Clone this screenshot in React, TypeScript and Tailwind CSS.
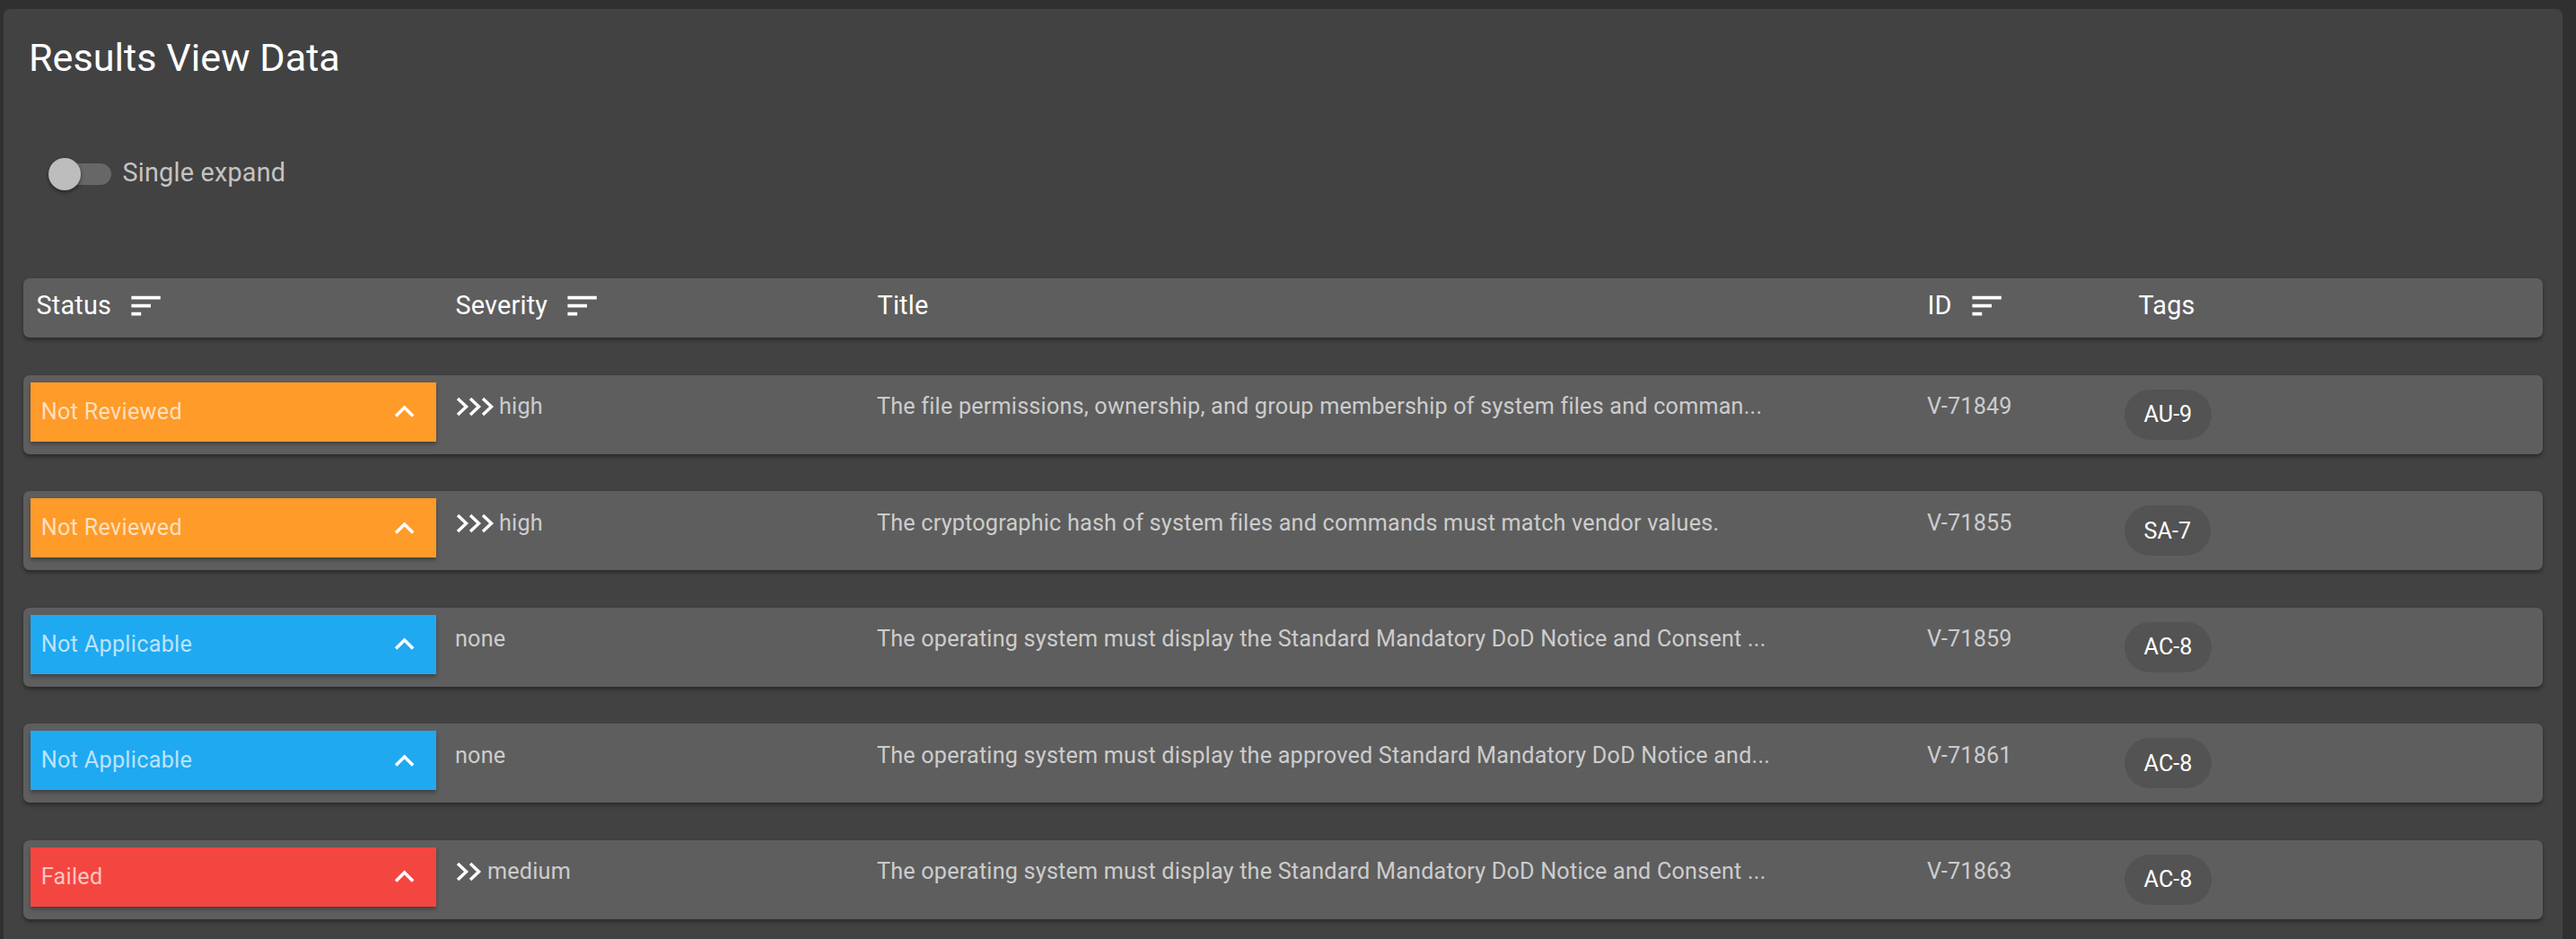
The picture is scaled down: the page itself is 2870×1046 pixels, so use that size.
import React from "react";

type Status = "Not Reviewed" | "Not Applicable" | "Failed";
type Severity = "high" | "medium" | "none";

type Row = {
  status: Status;
  severity: Severity;
  title: string;
  id: string;
  tag: string;
};

const rows: Row[] = [
  {
    status: "Not Reviewed",
    severity: "high",
    title:
      "The file permissions, ownership, and group membership of system files and comman...",
    id: "V-71849",
    tag: "AU-9",
  },
  {
    status: "Not Reviewed",
    severity: "high",
    title:
      "The cryptographic hash of system files and commands must match vendor values.",
    id: "V-71855",
    tag: "SA-7",
  },
  {
    status: "Not Applicable",
    severity: "none",
    title:
      "The operating system must display the Standard Mandatory DoD Notice and Consent ...",
    id: "V-71859",
    tag: "AC-8",
  },
  {
    status: "Not Applicable",
    severity: "none",
    title:
      "The operating system must display the approved Standard Mandatory DoD Notice and...",
    id: "V-71861",
    tag: "AC-8",
  },
  {
    status: "Failed",
    severity: "medium",
    title:
      "The operating system must display the Standard Mandatory DoD Notice and Consent ...",
    id: "V-71863",
    tag: "AC-8",
  },
];

const statusColor: Record<Status, string> = {
  "Not Reviewed": "bg-[#fe9b29]",
  "Not Applicable": "bg-[#1fa9f1]",
  Failed: "bg-[#f44640]",
};

function SortIcon() {
  return (
    <svg
      width="43.2"
      height="43.2"
      viewBox="0 0 24 24"
      className="ml-[17px] shrink-0"
    >
      <path fill="white" d="M3 18h6v-2H3v2zM3 6v2h18V6H3zm0 7h12v-2H3v2z" />
    </svg>
  );
}

function ChevronUp() {
  return (
    <svg width="43.2" height="43.2" viewBox="0 0 24 24" className="shrink-0">
      <path
        fill="white"
        d="M7.41,15.41L12,10.83L16.59,15.41L18,14L12,8L6,14L7.41,15.41Z"
      />
    </svg>
  );
}

function Chevrons({ count }: { count: number }) {
  const w = count === 3 ? 44 : 30;
  return (
    <svg width={w} height="22" viewBox={`0 0 ${w} 22`} className="shrink-0">
      {Array.from({ length: count }).map((_, i) => (
        <polyline
          key={i}
          points={`${3 + i * 14},2 ${12.5 + i * 14},11 ${3 + i * 14},20`}
          fill="none"
          stroke="white"
          strokeWidth="3.5"
        />
      ))}
    </svg>
  );
}

function HeaderCell({ label, sort }: { label: string; sort?: boolean }) {
  return (
    <div className="flex items-center">
      <span className="text-[28.8px] leading-[43.2px] tracking-[0.2px] text-white">
        {label}
      </span>
      {sort && <SortIcon />}
    </div>
  );
}

export default function App() {
  return (
    <div className="h-[1046px] overflow-hidden bg-[#303030] pl-[4px] pr-[15px] pt-[10px] font-['Roboto',sans-serif]">
      <div className="rounded-t-[7px] bg-[#424242] pt-[23.3px] pb-[60px]">
        <div className="h-[64px] pl-[28px] text-[43.2px] leading-[64px] text-white">
          Results View Data
        </div>

        <div className="mt-[66.7px] flex h-[60px] items-center pl-[50px]">
          <div className="relative h-[36px] w-[70px] shrink-0">
            <div className="absolute left-[1px] top-[6px] h-[24px] w-[69px] rounded-full bg-white/20" />
            <div className="absolute left-0 top-0 h-[36px] w-[36px] rounded-full bg-[#bdbdbd] shadow-[0_2px_4px_rgba(0,0,0,0.45)]" />
          </div>
          <span className="ml-[12.5px] pb-[3px] text-[28.8px] leading-[43px] tracking-[0.2px] text-white/70">
            Single expand
          </span>
        </div>

        <div className="mx-[22px] mt-[86px] grid h-[66px] grid-cols-[467px_470px_1170px_235px_1fr] items-center rounded-[7px] bg-[#5e5e5e] pb-[4px] pl-[14.5px] shadow-[0_3px_4px_rgba(0,0,0,0.35)]">
          <HeaderCell label="Status" sort />
          <HeaderCell label="Severity" sort />
          <HeaderCell label="Title" />
          <HeaderCell label="ID" sort />
          <HeaderCell label="Tags" />
        </div>

        <div className="mx-[22px] mt-[42px] flex flex-col gap-[41.5px]">
          {rows.map((r, idx) => (
            <div
              key={idx}
              className="grid h-[88px] grid-cols-[473px_470px_1170px_220px_1fr] items-start rounded-[7px] bg-[#5e5e5e] pl-[8px] shadow-[0_3px_4px_rgba(0,0,0,0.35)]"
            >
              <div className="pt-[8px]">
                <div
                  className={`flex h-[66px] w-[452px] items-center justify-between pl-[11.7px] pr-[13.5px] shadow-[0_3px_4px_rgba(0,0,0,0.3)] ${statusColor[r.status]}`}
                >
                  <span className="text-[25.2px] leading-[38px] tracking-[0.3px] text-white/70">
                    {r.status}
                  </span>
                  <ChevronUp />
                </div>
              </div>

              <div className="pt-[16.4px]">
                <div className="flex h-[38px] items-center">
                  {r.severity === "high" && <Chevrons count={3} />}
                  {r.severity === "medium" && <Chevrons count={2} />}
                  <span
                    className={`text-[25.2px] leading-[38px] tracking-[0.2px] text-white/70 ${
                      r.severity === "high"
                        ? "ml-[5px]"
                        : r.severity === "medium"
                        ? "ml-[6px]"
                        : ""
                    }`}
                  >
                    {r.severity}
                  </span>
                </div>
              </div>

              <div className="overflow-hidden whitespace-nowrap pt-[16.4px] text-[25.2px] leading-[38px] tracking-[0.2px] text-white/70">
                {r.title}
              </div>

              <div className="pt-[16.4px] text-[25.2px] leading-[38px] tracking-[0.2px] text-white/70">
                {r.id}
              </div>

              <div className="pt-[16px]">
                <span className="inline-flex h-[56px] items-center rounded-full bg-[#535353] px-[21.6px] text-[25.2px] text-white">
                  {r.tag}
                </span>
              </div>
            </div>
          ))}
        </div>
      </div>
    </div>
  );
}
